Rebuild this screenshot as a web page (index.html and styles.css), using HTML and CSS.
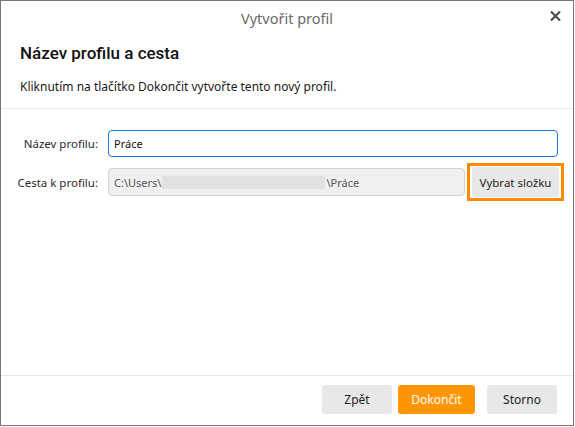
FILE: index.html
```html
<!DOCTYPE html>
<html lang="cs">
<head>
<meta charset="utf-8">
<title>Vytvořit profil</title>
<link rel="stylesheet" href="styles.css">
</head>
<body>
<div class="dialog">
  <div class="titlebar">
    <div class="title-spacer"></div>
    <div class="title">Vytvořit profil</div>
    <div class="close" aria-label="Zavřít">
      <svg width="11" height="10" viewBox="0 0 11 10"><path d="M1 0.5 L10 9.5 M10 0.5 L1 9.5" stroke="#505050" stroke-width="2.2" fill="none"/></svg>
    </div>
  </div>
  <div class="intro">
    <h1 class="heading">Název profilu a cesta</h1>
    <p class="desc">Kliknutím na tlačítko Dokončit vytvořte tento nový profil.</p>
  </div>
  <div class="form">
    <label class="label">Název profilu:</label>
    <div class="field field-active">Práce</div>
    <label class="label">Cesta k profilu:</label>
    <div class="path-row">
      <div class="field field-readonly">C:\Users\<span class="masked"></span>\Práce</div>
      <span class="focus-ring"><button class="btn btn-pick">Vybrat složku</button></span>
    </div>
  </div>
  <div class="footer">
    <button class="btn btn-back">Zpět</button>
    <button class="btn btn-primary">Dokončit</button>
    <button class="btn btn-cancel">Storno</button>
  </div>
</div>
</body>
</html>
```

FILE: styles.css
```css
html, body {
  margin: 0;
  padding: 0;
  background: #ffffff;
}

body {
  font-family: "Noto Sans", "Open Sans", sans-serif;
  color: #1e1e1e;
}

.dialog {
  box-sizing: border-box;
  width: 574px;
  height: 426px;
  border: 1px solid #777777;
  display: flex;
  flex-direction: column;
  background: #ffffff;
}

.titlebar {
  display: grid;
  grid-template-columns: 53px 1fr 53px;
  align-items: center;
  height: 33px;
}

.title {
  text-align: center;
  font-size: 14.5px;
  color: #6a6a6a;
  padding-top: 1px;
}

.close {
  box-sizing: border-box;
  padding-left: 30px;
  display: flex;
  align-items: center;
  padding-bottom: 3px;
}

.intro {
  padding: 0 19px;
  border-bottom: 1px solid #e6e6e6;
  height: 74px;
}

.heading {
  margin: 7px 0 0 0;
  font-family: Roboto, "Noto Sans", sans-serif;
  font-size: 17px;
  font-weight: 500;
  line-height: 24px;
  color: #111111;
}

.desc {
  margin: 14px 0 0 0;
  font-size: 12px;
  line-height: 16px;
  color: #1a1a1a;
}

.form {
  display: grid;
  grid-template-columns: 97px 1fr;
  column-gap: 10px;
  row-gap: 6px;
  align-items: center;
  padding: 21px 15px 0 0;
  flex: 1;
  align-content: start;
}

.label {
  text-align: right;
  font-size: 11.5px;
  color: #2a2a2a;
}

.field {
  box-sizing: border-box;
  height: 27px;
  border-radius: 4px;
  display: flex;
  align-items: center;
  padding-left: 5px;
  font-size: 11px;
  white-space: nowrap;
}

.field-active {
  border: 1px solid #1a73d9;
  color: #111111;
}

.field-readonly {
  height: 28px;
  border: 1px solid #d2d2d2;
  background: #efefef;
  color: #555555;
}

.masked {
  display: inline-block;
  width: 163px;
  height: 13px;
  background: #e1e1e1;
  margin-left: 1px;
  margin-right: 1px;
}

.path-row {
  display: grid;
  grid-template-columns: 1fr auto;
  column-gap: 2px;
  align-items: center;
  margin-right: -6px;
}

.focus-ring {
  display: block;
  border: 3px solid #ff8a00;
  padding: 1px 2px;
}

.btn {
  font-family: inherit;
  font-size: 12px;
  border: none;
  border-radius: 3px;
  background: #e8e8e8;
  color: #1e1e1e;
  padding: 0;
  height: 29px;
  cursor: pointer;
  display: block;
}

.btn-pick {
  width: 87px;
  height: 30px;
  font-size: 11.5px;
}

.footer {
  border-top: 1px solid #e6e6e6;
  display: flex;
  justify-content: flex-end;
  align-items: center;
  padding: 9px 16px 11px 0;
}

.btn-back {
  width: 70px;
}

.btn-primary {
  width: 77px;
  margin-left: 6px;
  background: #ff9500;
  color: #ffffff;
}

.btn-cancel {
  width: 70px;
  margin-left: 12px;
}
```
